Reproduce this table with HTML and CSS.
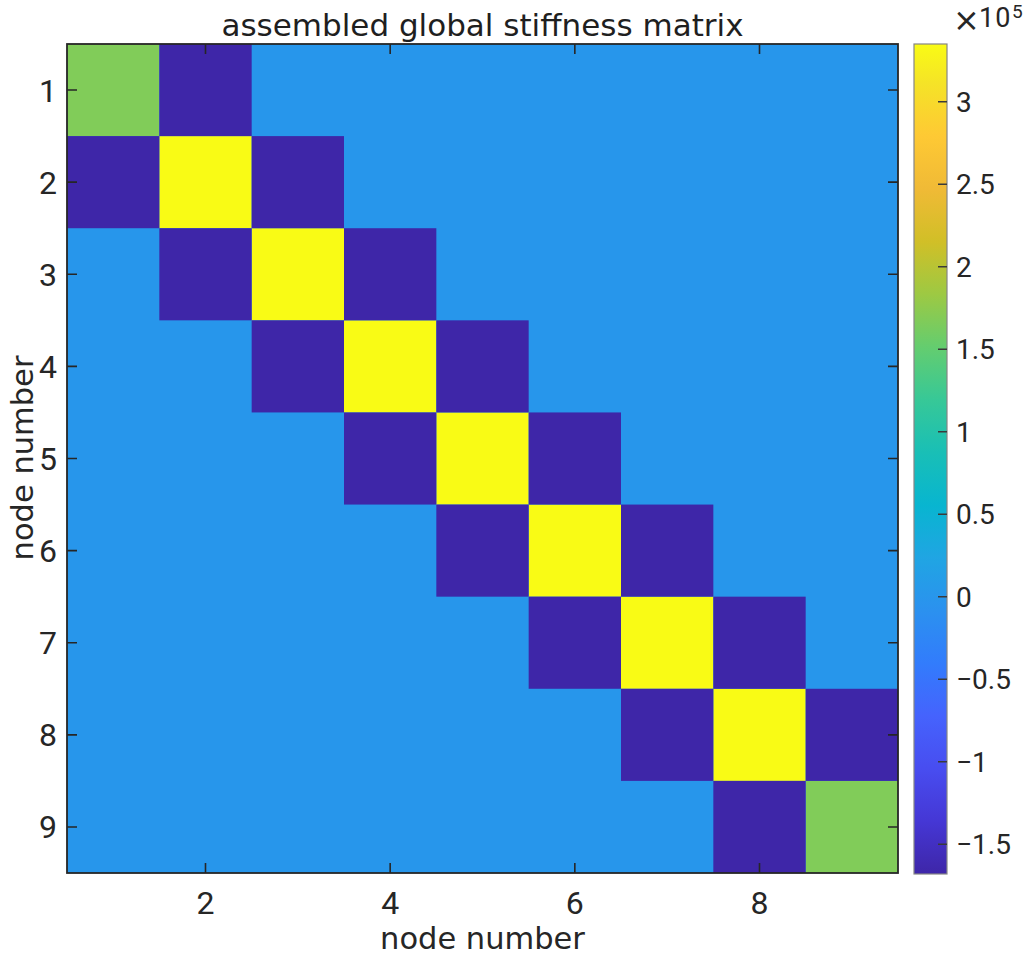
FILE: index.html
```html
<!DOCTYPE html>
<html lang="en">
<head>
<meta charset="utf-8">
<title>assembled global stiffness matrix</title>
<link rel="stylesheet" href="styles.css">
</head>
<body>
<main class="figure">
<svg class="plot" width="1024" height="955" viewBox="0 0 1024 955" xmlns="http://www.w3.org/2000/svg">
  <defs>
    <linearGradient id="parula" x1="0" y1="1" x2="0" y2="0">
      <stop offset="0" stop-color="#3e26a8"/>
      <stop offset="0.0635" stop-color="#4537d5"/>
      <stop offset="0.127" stop-color="#484df0"/>
      <stop offset="0.1905" stop-color="#4563fd"/>
      <stop offset="0.254" stop-color="#327cfc"/>
      <stop offset="0.3175" stop-color="#2b91ef"/>
      <stop offset="0.381" stop-color="#20a5e3"/>
      <stop offset="0.4444" stop-color="#08b5d0"/>
      <stop offset="0.5079" stop-color="#19bfb6"/>
      <stop offset="0.5714" stop-color="#37c897"/>
      <stop offset="0.6349" stop-color="#64cd6f"/>
      <stop offset="0.6984" stop-color="#9dc943"/>
      <stop offset="0.7619" stop-color="#d1bf27"/>
      <stop offset="0.8254" stop-color="#f0ba36"/>
      <stop offset="0.8889" stop-color="#fec934"/>
      <stop offset="0.9524" stop-color="#f5e327"/>
      <stop offset="1" stop-color="#f9fb15"/>
    </linearGradient>
  </defs>

  <text class="title" x="482.5" y="35.5">assembled global stiffness matrix</text>

  <g class="cells" transform="translate(67 44) scale(92.3333 92.1111)">
    <rect class="c-zero" x="0" y="0" width="9" height="9"/>
    <rect class="c-half" x="0" y="0" width="1" height="1"/>
    <rect class="c-max" x="1" y="1" width="1" height="1"/>
    <rect class="c-max" x="2" y="2" width="1" height="1"/>
    <rect class="c-max" x="3" y="3" width="1" height="1"/>
    <rect class="c-max" x="4" y="4" width="1" height="1"/>
    <rect class="c-max" x="5" y="5" width="1" height="1"/>
    <rect class="c-max" x="6" y="6" width="1" height="1"/>
    <rect class="c-max" x="7" y="7" width="1" height="1"/>
    <rect class="c-half" x="8" y="8" width="1" height="1"/>
    <rect class="c-min" x="1" y="0" width="1" height="1"/>
    <rect class="c-min" x="2" y="1" width="1" height="1"/>
    <rect class="c-min" x="3" y="2" width="1" height="1"/>
    <rect class="c-min" x="4" y="3" width="1" height="1"/>
    <rect class="c-min" x="5" y="4" width="1" height="1"/>
    <rect class="c-min" x="6" y="5" width="1" height="1"/>
    <rect class="c-min" x="7" y="6" width="1" height="1"/>
    <rect class="c-min" x="8" y="7" width="1" height="1"/>
    <rect class="c-min" x="0" y="1" width="1" height="1"/>
    <rect class="c-min" x="1" y="2" width="1" height="1"/>
    <rect class="c-min" x="2" y="3" width="1" height="1"/>
    <rect class="c-min" x="3" y="4" width="1" height="1"/>
    <rect class="c-min" x="4" y="5" width="1" height="1"/>
    <rect class="c-min" x="5" y="6" width="1" height="1"/>
    <rect class="c-min" x="6" y="7" width="1" height="1"/>
    <rect class="c-min" x="7" y="8" width="1" height="1"/>
  </g>

  <g class="ticks">
    <path d="M67 90.06h10M898 90.06h-10
             M67 182.17h10M898 182.17h-10
             M67 274.28h10M898 274.28h-10
             M67 366.39h10M898 366.39h-10
             M67 458.5h10M898 458.5h-10
             M67 550.61h10M898 550.61h-10
             M67 642.72h10M898 642.72h-10
             M67 734.83h10M898 734.83h-10
             M67 826.94h10M898 826.94h-10
             M205.5 873v-10M205.5 44v10
             M390.17 873v-10M390.17 44v10
             M574.83 873v-10M574.83 44v10
             M759.5 873v-10M759.5 44v10"/>
  </g>
  <rect class="axes-box" x="67" y="44" width="831" height="829"/>

  <g class="ylabels">
    <text x="57" y="101.5">1</text>
    <text x="57" y="193.6">2</text>
    <text x="57" y="285.7">3</text>
    <text x="57" y="377.8">4</text>
    <text x="57" y="469.9">5</text>
    <text x="57" y="562">6</text>
    <text x="57" y="654.1">7</text>
    <text x="57" y="746.2">8</text>
    <text x="57" y="838.3">9</text>
  </g>
  <g class="xlabels">
    <text x="205.5" y="914">2</text>
    <text x="390.17" y="914">4</text>
    <text x="574.83" y="914">6</text>
    <text x="759.5" y="914">8</text>
  </g>

  <text class="axis-label" x="482.5" y="949">node number</text>
  <text class="axis-label" transform="translate(33 458) rotate(-90)" x="0" y="0">node number</text>

  <rect class="colorbar" x="914" y="44" width="33" height="830" fill="url(#parula)"/>
  <path class="cb-ticks" d="M947 101.7h-9M947 184.2h-9M947 266.7h-9M947 349.2h-9M947 431.7h-9M947 514.2h-9M947 596.7h-9M947 679.2h-9M947 761.7h-9M947 844.2h-9"/>
  <g class="cblabels">
    <text x="956" y="111.6">3</text>
    <text x="956" y="194.1">2.5</text>
    <text x="956" y="276.6">2</text>
    <text x="956" y="359.1">1.5</text>
    <text x="956" y="441.6">1</text>
    <text x="956" y="524.1">0.5</text>
    <text x="956" y="606.6">0</text>
    <text x="956" y="689.1">−0.5</text>
    <text x="956" y="771.6">−1</text>
    <text x="956" y="854.1">−1.5</text>
  </g>
  <text class="exponent" x="953" y="31"><tspan class="times">×</tspan><tspan class="base" x="979" y="27">10</tspan><tspan class="sup" x="1012" y="17.5">5</tspan></text>
</svg>
</main>
</body>
</html>
```

FILE: styles.css
```css
html, body {
  margin: 0;
  padding: 0;
  background: #ffffff;
}

.figure {
  display: block;
  width: 1024px;
  height: 955px;
  overflow: hidden;
}

.plot {
  display: block;
  font-family: "DejaVu Sans", "Liberation Sans", sans-serif;
  fill: #262626;
}

.title {
  font-size: 31px;
  text-anchor: middle;
  fill: #1f1f1f;
}

.axis-label {
  font-size: 30.5px;
  text-anchor: middle;
  fill: #262626;
}

.c-zero { fill: #2796eb; }
.c-half { fill: #81cc59; }
.c-max  { fill: #f9fb15; }
.c-min  { fill: #3e26a8; }

.ticks path {
  stroke: #262626;
  stroke-width: 1.6;
  fill: none;
}

.axes-box {
  fill: none;
  stroke: #262626;
  stroke-width: 1.8;
}

.ylabels text {
  font-family: Roboto, "Liberation Sans", sans-serif;
  font-size: 32px;
  text-anchor: end;
}

.xlabels text {
  font-family: Roboto, "Liberation Sans", sans-serif;
  font-size: 32px;
  text-anchor: middle;
}

.colorbar {
  stroke: #858585;
  stroke-width: 1.2;
}

.cb-ticks {
  stroke: #3a3a3a;
  stroke-width: 1.4;
  fill: none;
}

.cblabels text {
  font-family: Roboto, "Liberation Sans", sans-serif;
  font-size: 28px;
}

.exponent {
  font-family: Roboto, "Liberation Sans", sans-serif;
  font-size: 27px;
}

.exponent .times {
  font-family: "DejaVu Sans", sans-serif;
  font-size: 32px;
}

.exponent .base {
  font-size: 27px;
  letter-spacing: 1px;
}

.exponent .sup {
  font-size: 19px;
}
```
